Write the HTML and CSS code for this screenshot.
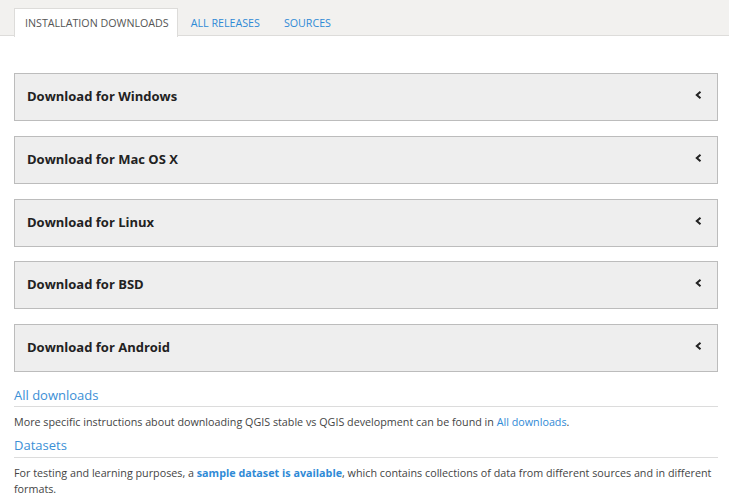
FILE: index.html
```html
<!DOCTYPE html>
<html>
<head>
<meta charset="utf-8">
<link rel="stylesheet" href="styles.css">
</head>
<body>
<div class="tabbar">
  <ul class="tabs">
    <li class="tab active">Installation Downloads</li>
    <li class="tab"><a href="#">All releases</a></li>
    <li class="tab"><a href="#">Sources</a></li>
  </ul>
</div>
<div class="content">
  <div class="panels">
    <div class="panel"><span class="ptitle">Download for Windows</span><svg class="chev" width="7" height="8" viewBox="0 0 7 8"><path d="M5.5 0.8 L1.8 4 L5.5 7.2" fill="none" stroke="#222" stroke-width="2"/></svg></div>
    <div class="panel"><span class="ptitle">Download for Mac OS X</span><svg class="chev" width="7" height="8" viewBox="0 0 7 8"><path d="M5.5 0.8 L1.8 4 L5.5 7.2" fill="none" stroke="#222" stroke-width="2"/></svg></div>
    <div class="panel"><span class="ptitle">Download for Linux</span><svg class="chev" width="7" height="8" viewBox="0 0 7 8"><path d="M5.5 0.8 L1.8 4 L5.5 7.2" fill="none" stroke="#222" stroke-width="2"/></svg></div>
    <div class="panel"><span class="ptitle">Download for BSD</span><svg class="chev" width="7" height="8" viewBox="0 0 7 8"><path d="M5.5 0.8 L1.8 4 L5.5 7.2" fill="none" stroke="#222" stroke-width="2"/></svg></div>
    <div class="panel"><span class="ptitle">Download for Android</span><svg class="chev" width="7" height="8" viewBox="0 0 7 8"><path d="M5.5 0.8 L1.8 4 L5.5 7.2" fill="none" stroke="#222" stroke-width="2"/></svg></div>
  </div>
  <h3 class="sec first">All downloads</h3>
  <p class="txt">More specific instructions about downloading QGIS stable vs QGIS development can be found in <a href="#">All downloads</a>.</p>
  <h3 class="sec">Datasets</h3>
  <p class="txt">For testing and learning purposes, a <a href="#" class="strong">sample dataset is available</a>, which contains collections of data from different sources and in different formats.</p>
</div>
</body>
</html>
```
FILE: styles.css
```css
html, body {
  margin: 0;
  padding: 0;
  background: #fff;
  font-family: "Open Sans", "Liberation Sans", sans-serif;
}
a { color: #2f8ad6; text-decoration: none; }
.tabbar {
  background: #f2f1ef;
  border-bottom: 1px solid #dddcda;
  height: 35px;
}
.tabs {
  list-style: none;
  margin: 0;
  padding: 8px 0 0 14px;
  display: flex;
}
.tab {
  font-size: 10.7px;
  line-height: 15px;
  text-transform: uppercase;
  padding: 7px 10px 5px 10px;
  margin-right: 2px;
  border: 1px solid transparent;
  border-bottom: none;
}
.tab.active {
  background: #fff;
  color: #555;
  border-color: #dddcda;
  height: 16px;
  padding-right: 8px;
}
.content {
  padding: 37px 11px 0 14px;
}
.panels {
  display: flex;
  flex-direction: column;
  gap: 14.75px;
}
.panel {
  height: 44px;
  background: #eeeeee;
  border: 1px solid #bcbcbc;
  display: flex;
  align-items: center;
  justify-content: space-between;
  padding: 0 15px 2px 12px;
}
.ptitle {
  font-size: 13px;
  font-weight: bold;
  color: #222;
}
.chev { display: block; margin-top: -2px; }
.sec {
  font-size: 13px;
  font-weight: normal;
  color: #3b8fd6;
  margin: 6px 0 0 0;
  line-height: 18px;
  padding-bottom: 3px;
  border-bottom: 1px solid #dcdcdc;
}
.sec.first { margin-top: 14px; padding-bottom: 2px; }
.txt {
  font-size: 10.75px;
  line-height: 16px;
  color: #444;
  margin: 7px 0 0 0;
}
.txt .strong { font-weight: bold; }
```
